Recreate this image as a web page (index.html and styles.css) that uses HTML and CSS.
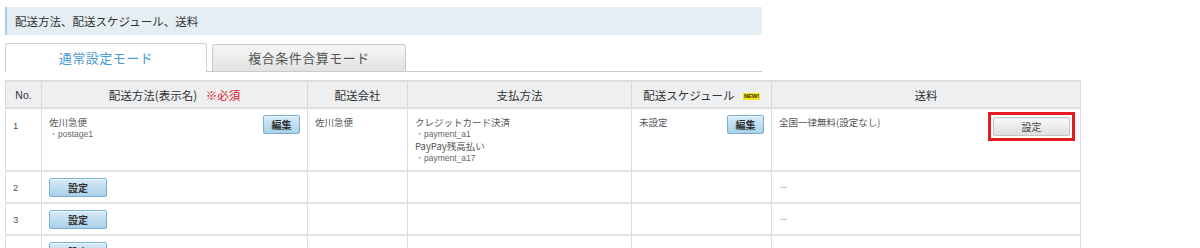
FILE: index.html
```html
<!DOCTYPE html>
<html lang="ja">
<head>
<meta charset="utf-8">
<link rel="stylesheet" href="styles.css">
</head>
<body>
<div class="page">
  <div class="title">配送方法、配送スケジュール、送料</div>
  <div class="tabs">
    <div class="tab tab-active">通常設定モード</div>
    <div class="tab tab-inactive">複合条件合算モード</div>
  </div>
  <table class="grid">
    <colgroup>
      <col class="c-no"><col class="c-method"><col class="c-company"><col class="c-pay"><col class="c-sched"><col class="c-fee">
    </colgroup>
    <thead>
      <tr>
        <th>No.</th>
        <th>配送方法(表示名) <span class="req">※必須</span></th>
        <th>配送会社</th>
        <th>支払方法</th>
        <th>配送スケジュール <span class="new">NEW!</span></th>
        <th>送料</th>
      </tr>
    </thead>
    <tbody>
      <tr class="r1">
        <td class="num">1</td>
        <td><button class="btn btn-blue btn-edit">編集</button><div class="main">佐川急便</div><div class="sub">・postage1</div></td>
        <td><div class="main">佐川急便</div></td>
        <td><div class="main">クレジットカード決済</div><div class="sub">・payment_a1</div><div class="main">PayPay残高払い</div><div class="sub">・payment_a17</div></td>
        <td><button class="btn btn-blue btn-edit">編集</button><div class="main">未設定</div></td>
        <td><span class="mark"><button class="btn btn-gray">設定</button></span><div class="main">全国一律無料(設定なし)</div></td>
      </tr>
      <tr class="r2">
        <td class="num">2</td>
        <td><button class="btn btn-blue btn-set">設定</button></td>
        <td></td><td></td><td></td>
        <td><div class="dash">－</div></td>
      </tr>
      <tr class="r2">
        <td class="num">3</td>
        <td><button class="btn btn-blue btn-set">設定</button></td>
        <td></td><td></td><td></td>
        <td><div class="dash">－</div></td>
      </tr>
      <tr class="r2">
        <td class="num">4</td>
        <td><button class="btn btn-blue btn-set">設定</button></td>
        <td></td><td></td><td></td>
        <td><div class="dash">－</div></td>
      </tr>
    </tbody>
  </table>
</div>
</body>
</html>
```

FILE: styles.css
```css
html, body {
  margin: 0;
  padding: 0;
  background: #fff;
}
body {
  font-family: "Noto Sans CJK JP", "Liberation Sans", sans-serif;
  color: #444;
}
.page {
  padding: 7px 0 0 5px;
}
.title {
  width: 747px;
  height: 28px;
  line-height: 28px;
  background: #e5eef3;
  border-left: 2px solid #9fcdee;
  padding-left: 8px;
  font-size: 11.5px;
  color: #333;
}
.tabs {
  display: flex;
  width: 757px;
  height: 28px;
  margin-top: 8px;
  border-bottom: 1px solid #c9c9c9;
  align-items: flex-end;
}
.tab {
  box-sizing: border-box;
  text-align: center;
  font-size: 13px;
  letter-spacing: 0.5px;
  border-radius: 3px 3px 0 0;
}
.tab-active {
  width: 202px;
  height: 29px;
  line-height: 28px;
  margin-bottom: -1px;
  background: #fff;
  border: 1px solid #cfcfcf;
  border-bottom: none;
  color: #4a9ad6;
}
.tab-inactive {
  width: 194px;
  height: 27px;
  line-height: 26px;
  margin-left: 5px;
  background: linear-gradient(#f6f6f6, #e2e2e2);
  border: 1px solid #c8c8c8;
  border-bottom: none;
  color: #555;
}
.grid {
  margin-top: 8px;
  width: 1075px;
  border-collapse: collapse;
  table-layout: fixed;
  border-left: 1px solid #cfcfcf;
  border-right: 1px solid #cfcfcf;
}
.c-no { width: 36px; }
.c-method { width: 266px; }
.c-company { width: 100px; }
.c-pay { width: 224px; }
.c-sched { width: 140px; }
.c-fee { width: 309px; }
.grid th {
  height: 25px;
  padding: 0;
  background: #edeff0;
  font-weight: normal;
  font-size: 11.5px;
  color: #333;
  border: 1px solid #d6d8d9;
  border-top: 2px solid #dcdcdc;
  border-bottom: 2px solid #dedede;
}
.grid th:first-child {
  font-family: "Liberation Sans", sans-serif;
  font-size: 10.5px;
}
.req {
  color: #e0202a;
  margin-left: 6px;
}
.new {
  display: inline-block;
  margin-left: 6px;
  padding: 0 1px;
  background: #f3e31a;
  color: #443300;
  font-family: "Liberation Sans", sans-serif;
  font-weight: bold;
  font-size: 6px;
  line-height: 7px;
  vertical-align: 2px;
  letter-spacing: -0.3px;
}
.grid td {
  vertical-align: top;
  padding: 7px 7px 0 7px;
  border-left: 1px solid #dcdcdc;
  border-right: 1px solid #dcdcdc;
  border-bottom: 2px solid #e2e2e2;
  font-size: 9.5px;
  line-height: 12px;
  color: #555;
}
.r1 td { height: 50px; }
.r2 td { height: 20px; padding-top: 6px; }
.num {
  color: #666;
  font-family: "Liberation Sans", sans-serif;
}
.r1 .num { padding-top: 11px; }
.r2 .num { padding-top: 10px; }
.main {
  line-height: 12px;
}
.sub {
  font-family: "Liberation Sans", sans-serif;
  font-size: 8.5px;
  line-height: 12px;
  color: #666;
}
.btn {
  font-family: "Noto Sans CJK JP", sans-serif;
  font-weight: bold;
  font-size: 10px;
  color: #333;
  padding: 0;
  cursor: pointer;
  border-radius: 2px;
  line-height: 16px;
}
.btn-blue {
  background: linear-gradient(#d7ebf8, #a9d0ea);
  border: 1px solid #7aaed2;
  box-shadow: inset 0 1px 0 #eef7fd;
}
.btn-edit {
  float: right;
  width: 37px;
  height: 19px;
  margin-top: -1px;
}
.btn-set {
  display: block;
  width: 58px;
  height: 19px;
}
.mark {
  float: right;
  border: 3px solid #e51c24;
  padding: 2px;
  margin-top: -4px;
  margin-right: -2px;
  line-height: 0;
}
.btn-gray {
  width: 77px;
  height: 19px;
  background: linear-gradient(#fafafa, #dedede);
  border: 1px solid #c4c4c4;
  color: #444;
  font-weight: normal;
}
.dash {
  margin-top: 4px;
  color: #aaa;
  font-size: 9px;
}
```
